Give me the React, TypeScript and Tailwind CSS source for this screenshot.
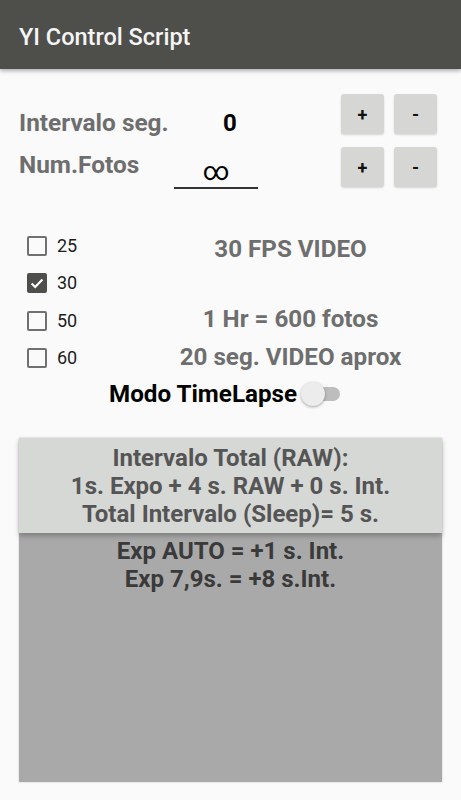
import React from "react";

function Box({ checked, label }: { checked?: boolean; label: string }) {
  return (
    <div className="flex h-[37.5px] items-center">
      <div
        className={
          checked
            ? "ml-[27px] flex h-[20px] w-[20px] items-center justify-center rounded-[2px] bg-[#4e4e4b]"
            : "ml-[27px] h-[20px] w-[20px] rounded-[2px] border-2 border-[#707070]"
        }
      >
        {checked && (
          <svg viewBox="0 0 20 20" className="h-[18px] w-[18px]">
            <path d="M4 10.5 L8 14.5 L16 6" fill="none" stroke="#ffffff" strokeWidth="2.4" />
          </svg>
        )}
      </div>
      <span className="ml-[10px] text-[18px] leading-none text-[#1c1c1c]">{label}</span>
    </div>
  );
}

function Btn({ children }: { children: React.ReactNode }) {
  return (
    <div className="flex h-[40px] w-[43px] items-center justify-center rounded-[3px] bg-[#d6d7d5] text-[18px] font-bold text-[#111] shadow-[0_1px_2px_rgba(0,0,0,0.15)]">
      {children}
    </div>
  );
}

export default function App() {
  return (
    <div className="min-h-[800px] w-[461px] bg-[#fafafa] font-['Roboto',sans-serif]">
      <div className="flex h-[69px] items-center bg-[#4e4e4b] pl-[19px] pt-[7px] shadow-[0_2px_4px_rgba(0,0,0,0.3)]">
        <span className="text-[23.5px] font-medium text-[#f5f5f5]">YI Control Script</span>
      </div>

      <div className="mt-[25px] flex h-[40px] items-start pl-[19px] pr-[24px]">
        <span className="mt-[15px] w-[155px] text-[24.4px] leading-[28px] font-bold text-[#6e6e6e]">Intervalo seg.</span>
        <span className="mt-[15px] w-[112px] text-center text-[24px] leading-[28px] font-bold text-black">0</span>
        <div className="flex-1" />
        <div className="flex gap-[10px]">
          <Btn>+</Btn>
          <Btn>-</Btn>
        </div>
      </div>

      <div className="mt-[13px] flex h-[41px] items-start pl-[19px] pr-[24px]">
        <span className="mt-[4px] w-[155px] text-[24.4px] leading-[28px] font-bold text-[#6e6e6e]">Num.Fotos</span>
        <div className="mt-[10px] w-[84px] border-b-2 border-[#333] pb-[2px] text-center text-[26px] leading-[28px] text-black">
          ∞
        </div>
        <div className="flex-1" />
        <div className="flex gap-[10px]">
          <Btn>+</Btn>
          <Btn>-</Btn>
        </div>
      </div>

      <div className="mt-[39px] flex">
        <div className="flex w-[120px] flex-col">
          <Box label="25" />
          <Box checked label="30" />
          <Box label="50" />
          <Box label="60" />
        </div>
        <div className="flex flex-1 flex-col items-center pt-[8px] text-[24.2px] leading-[28px] font-bold text-[#6e6e6e]">
          <span>30 FPS VIDEO</span>
          <span className="mt-[42px]">1 Hr = 600 fotos</span>
          <span className="mt-[10px]">20 seg. VIDEO aprox</span>
        </div>
      </div>

      <div className="mt-[3px] flex items-center pl-[109px]">
        <span className="text-[24.2px] leading-[28px] font-bold text-black">Modo TimeLapse</span>
        <div className="relative ml-[4px] h-[24px] w-[39px]">
          <div className="absolute left-[2px] top-[5px] h-[14px] w-[37px] rounded-full bg-[#bdbdbd]" />
          <div className="absolute left-0 top-0 h-[24px] w-[24px] rounded-full bg-[#ececec] shadow-[0_1px_3px_rgba(0,0,0,0.35)]" />
        </div>
      </div>

      <div className="mx-[19px] mt-[30px] flex h-[344px] flex-col bg-[#a9a9a9] shadow-[0_0_2px_rgba(0,0,0,0.2)]">
        <div className="relative z-10 flex flex-col items-center bg-[#d6d8d5] pt-[6px] pb-[5px] text-[24px] leading-[28px] font-bold text-[#555] shadow-[0_3px_5px_rgba(0,0,0,0.25)]">
          <span>Intervalo Total (RAW):</span>
          <span>1s. Expo + 4 s. RAW + 0 s. Int.</span>
          <span>Total Intervalo (Sleep)= 5 s.</span>
        </div>
        <div className="flex flex-col items-center pt-[4px] text-[24px] leading-[28px] font-bold text-[#3a3a3a]">
          <span>Exp AUTO = +1 s. Int.</span>
          <span>Exp 7,9s. = +8 s.Int.</span>
        </div>
      </div>
    </div>
  );
}
